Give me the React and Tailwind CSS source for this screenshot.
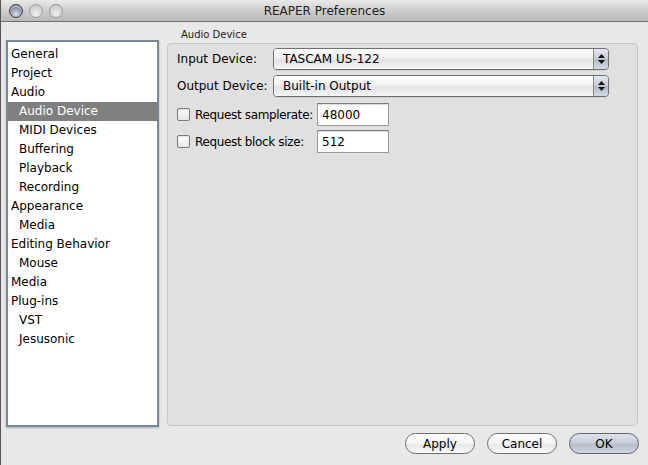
import React from "react";

const font = { fontFamily: '"DejaVu Sans", "Liberation Sans", sans-serif' };

const items = [
  ["General", 0],
  ["Project", 0],
  ["Audio", 0],
  ["Audio Device", 1, true],
  ["MIDI Devices", 1],
  ["Buffering", 1],
  ["Playback", 1],
  ["Recording", 1],
  ["Appearance", 0],
  ["Media", 1],
  ["Editing Behavior", 0],
  ["Mouse", 1],
  ["Media", 0],
  ["Plug-ins", 0],
  ["VST", 1],
  ["Jesusonic", 1],
];

function Select({ value }) {
  return (
    <div className="flex h-[22px] w-[336px] rounded-[4px] border border-[#6f6f6f] overflow-hidden shadow-[0_1px_0_rgba(0,0,0,0.08)]">
      <div className="flex-1 flex items-center pl-[9px] text-[12px] bg-[linear-gradient(#ffffff,#f0f0f0_45%,#e2e2e2_55%,#f6f6f6)]">
        {value}
      </div>
      <div className="w-[15px] border-l border-[#8a8a8a] flex flex-col items-center justify-center gap-[2px] bg-[linear-gradient(#e4e9f1,#c3cbd6_50%,#b2bccb_52%,#d2d9e3)]">
        <svg width="7" height="4" viewBox="0 0 7 4"><path d="M3.5 0L7 4H0z" fill="#111" /></svg>
        <svg width="7" height="4" viewBox="0 0 7 4"><path d="M0 0h7L3.5 4z" fill="#111" /></svg>
      </div>
    </div>
  );
}

function CheckRow({ label, value }) {
  return (
    <div className="flex items-center h-[23px]">
      <div className="w-[13px] h-[13px] rounded-[2px] border border-[#7a7a7a] bg-[linear-gradient(#fdfdfd,#e6e6e6)] shadow-[inset_0_1px_1px_rgba(0,0,0,0.1)]" />
      <div className="ml-[5px] w-[122px] text-[12px] tracking-[-0.35px] whitespace-nowrap">{label}</div>
      <div className="w-[72px] h-[23px] border border-[#9a9a9a] border-t-[#7a7a7a] bg-white flex items-center pl-[4px] text-[12px] shadow-[inset_0_1px_1px_rgba(0,0,0,0.15)]">
        {value}
      </div>
    </div>
  );
}

function Btn({ children, ok }) {
  return (
    <div
      className={
        "w-[70px] h-[21px] rounded-full border flex items-center justify-center text-[12px] " +
        (ok
          ? "border-[#5f6670] bg-[linear-gradient(#dfe4eb,#c4cbd5_50%,#b3bbc7_52%,#d0d6df)]"
          : "border-[#6f6f6f] bg-[linear-gradient(#ffffff,#f3f3f3_50%,#e6e6e6_52%,#f8f8f8)]")
      }
    >
      {children}
    </div>
  );
}

export default function App() {
  return (
    <div className="w-[648px] h-[465px] bg-[#e8e8e8] border-l border-[#555] flex flex-col text-black overflow-hidden" style={font}>
      <div className="h-[22px] relative flex items-center justify-center border-b border-[#6e6e6e] bg-[linear-gradient(#e9e9e9,#c9c9c9_60%,#b9b9b9)]">
        <div className="absolute left-[8px] top-[4px] flex gap-[6px]">
          <div className="w-[14px] h-[14px] rounded-full border border-[#3c414c] bg-[radial-gradient(circle_at_50%_75%,#dfe5ee,#8b93a3_55%,#4d5462)] shadow-[inset_0_2px_1px_rgba(255,255,255,0.45)]" />
          <div className="w-[14px] h-[14px] rounded-full border border-[#9c9c9c] bg-[radial-gradient(circle_at_50%_75%,#f0f0f0,#d2d2d2_60%,#bdbdbd)]" />
          <div className="w-[14px] h-[14px] rounded-full border border-[#9c9c9c] bg-[radial-gradient(circle_at_50%_75%,#f0f0f0,#d2d2d2_60%,#bdbdbd)]" />
        </div>
        <span className="text-[12px] text-[#222] mt-[1px]">REAPER Preferences</span>
      </div>

      <div className="flex pl-[5px]">
        <div className="mt-[18px] w-[153px] h-[387px] border-2 border-[#7e8894] bg-white pt-[3px] shadow-[0_1px_2px_rgba(0,0,0,0.25)]">
          {items.map(([t, ind, sel], i) => (
            <div
              key={i}
              className={
                "h-[19px] leading-[19px] text-[12px] " +
                (ind ? "pl-[11px] " : "pl-[3px] ") +
                (sel ? "bg-[#7f7f7f] text-white" : "")
              }
            >
              {t}
            </div>
          ))}
        </div>

        <div className="ml-[8px] flex flex-col">
          <div className="h-[21px] pl-[14px] pt-[6px] text-[10px] leading-[13px] text-[#222]">Audio Device</div>
          <div className="w-[471px] h-[383px] rounded-[4px] border border-[#c6c6c6] bg-[#e0e0e0] pl-[9px] pt-[4px] flex flex-col">
            <div className="flex items-center h-[22px]">
              <div className="w-[96px] text-[12px]">Input Device:</div>
              <Select value="TASCAM US-122" />
            </div>
            <div className="flex items-center h-[22px] mt-[5px]">
              <div className="w-[96px] text-[12px]">Output Device:</div>
              <Select value="Built-in Output" />
            </div>
            <div className="mt-[6px]">
              <CheckRow label="Request samplerate:" value="48000" />
            </div>
            <div className="mt-[4px]">
              <CheckRow label="Request block size:" value="512" />
            </div>
          </div>
        </div>
      </div>

      <div className="flex justify-end gap-[12px] pr-[9px] mt-[6px]">
        <Btn>Apply</Btn>
        <Btn>Cancel</Btn>
        <Btn ok>OK</Btn>
      </div>
    </div>
  );
}
